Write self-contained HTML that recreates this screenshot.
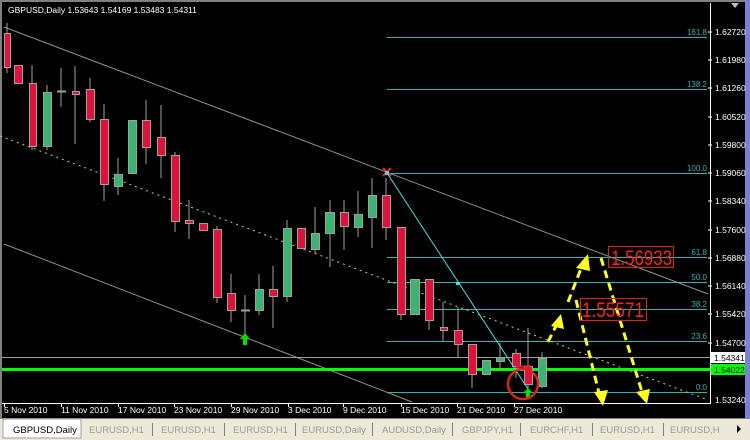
<!DOCTYPE html>
<html><head><style>
html,body{margin:0;padding:0;background:#ece9d8;width:750px;height:440px;overflow:hidden}
svg{display:block}
text{font-family:"Liberation Sans",sans-serif}
</style></head><body>
<svg width="750" height="440" xmlns="http://www.w3.org/2000/svg">
<rect x="0" y="0" width="750" height="440" fill="#ece9d8"/>
<rect x="0" y="0" width="746" height="419" fill="#808080"/>
<rect x="2" y="2" width="743" height="416" fill="#000"/>
<rect x="745" y="0" width="5" height="419" fill="#7b7fd8"/>
<polygon points="731,3 739,3 735,8" fill="#c0c0c0"/>
<g stroke="#2bb5b5" stroke-width="1">
<line x1="387" y1="37.5" x2="707" y2="37.5"/>
<line x1="387" y1="89.5" x2="707" y2="89.5"/>
<line x1="387" y1="173.5" x2="707" y2="173.5"/>
<line x1="387" y1="257.5" x2="707" y2="257.5"/>
<line x1="387" y1="282.5" x2="707" y2="282.5"/>
<line x1="387" y1="309.5" x2="707" y2="309.5"/>
<line x1="387" y1="341.5" x2="707" y2="341.5"/>
<line x1="387" y1="392.5" x2="707" y2="392.5"/>
</g>
<g fill="#2bb5b5" font-size="8" text-anchor="end">
<text x="707" y="35">161.8</text><text x="707" y="87">138.2</text><text x="707" y="171">100.0</text>
<text x="707" y="255">61.8</text><text x="707" y="280">50.0</text><text x="707" y="307">38.2</text>
<text x="707" y="339">23.6</text><text x="707" y="390">0.0</text>
</g>
<line x1="4" y1="27" x2="708" y2="294" stroke="#909090"/>
<line x1="4" y1="244" x2="412" y2="402" stroke="#909090"/>
<line x1="0" y1="136" x2="708" y2="400" stroke="#d8d820" stroke-dasharray="2,4"/>
<line x1="2" y1="357.5" x2="710" y2="357.5" stroke="#a0a0a0"/>
<rect x="2" y="368" width="708" height="3" fill="#00ff00"/>
<g stroke="#a0a0a0">
<line x1="7" y1="23" x2="7" y2="73"/><line x1="32" y1="65" x2="32" y2="150"/><line x1="47" y1="85" x2="47" y2="150"/>
<line x1="61" y1="68" x2="61" y2="107"/><line x1="75" y1="66" x2="75" y2="144"/><line x1="90" y1="78" x2="90" y2="122"/>
<line x1="104" y1="104" x2="104" y2="201"/><line x1="118" y1="158" x2="118" y2="195"/><line x1="146" y1="100" x2="146" y2="164"/>
<line x1="161" y1="105" x2="161" y2="178"/><line x1="175" y1="152" x2="175" y2="232"/><line x1="189" y1="200" x2="189" y2="239"/>
<line x1="217" y1="226" x2="217" y2="303"/><line x1="231" y1="274" x2="231" y2="322"/><line x1="245" y1="295" x2="245" y2="340"/>
<line x1="259" y1="274" x2="259" y2="315"/><line x1="273" y1="266" x2="273" y2="328"/><line x1="287" y1="220" x2="287" y2="302"/>
<line x1="315" y1="207" x2="315" y2="253"/><line x1="330" y1="200" x2="330" y2="267"/><line x1="344" y1="200" x2="344" y2="250"/>
<line x1="358" y1="191" x2="358" y2="237"/><line x1="372" y1="178" x2="372" y2="248"/><line x1="386" y1="178" x2="386" y2="240"/>
<line x1="401" y1="227" x2="401" y2="320"/><line x1="429" y1="279" x2="429" y2="330"/><line x1="443" y1="302" x2="443" y2="341"/>
<line x1="458" y1="307" x2="458" y2="357"/><line x1="472" y1="344" x2="472" y2="388"/><line x1="500" y1="343" x2="500" y2="370"/>
<line x1="516" y1="349" x2="516" y2="378"/><line x1="528" y1="328" x2="528" y2="392"/><line x1="542" y1="352" x2="542" y2="388"/>
</g>
<g stroke="#a0a0a0" stroke-width="1">
<g fill="#dc143c">
<rect x="4.5" y="33.5" width="6" height="34"/><rect x="14.5" y="65.5" width="8" height="18"/><rect x="29.5" y="83.5" width="7" height="63"/>
<rect x="72.5" y="91.5" width="7" height="3"/><rect x="86.5" y="89.5" width="8" height="30"/><rect x="100.5" y="119.5" width="8" height="65"/>
<rect x="142.5" y="120.5" width="8" height="27"/><rect x="157.5" y="137.5" width="8" height="18"/><rect x="171.5" y="155.5" width="8" height="66"/>
<rect x="185.5" y="220.5" width="8" height="3"/><rect x="199.5" y="223.5" width="8" height="7"/><rect x="213.5" y="229.5" width="8" height="68"/>
<rect x="227.5" y="293.5" width="8" height="17"/><rect x="269.5" y="289.5" width="8" height="7"/><rect x="297.5" y="228.5" width="8" height="20"/>
<rect x="340.5" y="212.5" width="8" height="14"/><rect x="382.5" y="195.5" width="8" height="32"/><rect x="397.5" y="227.5" width="8" height="87"/>
<rect x="425.5" y="279.5" width="8" height="41"/><rect x="440.5" y="327.5" width="7" height="3"/><rect x="454.5" y="330.5" width="8" height="14"/>
<rect x="468.5" y="344.5" width="8" height="30"/><rect x="512.5" y="353.5" width="8" height="13"/><rect x="524.5" y="366.5" width="8" height="18"/>
</g>
<g fill="#3cb371">
<rect x="43.5" y="92.5" width="8" height="54"/><rect x="114.5" y="174.5" width="8" height="12"/><rect x="128.5" y="120.5" width="8" height="53"/>
<rect x="255.5" y="289.5" width="8" height="21"/><rect x="283.5" y="228.5" width="8" height="68"/><rect x="311.5" y="233.5" width="8" height="16"/>
<rect x="325.5" y="212.5" width="9" height="21"/><rect x="354.5" y="214.5" width="8" height="13"/><rect x="368.5" y="195.5" width="8" height="22"/>
<rect x="410.5" y="279.5" width="9" height="35"/><rect x="482.5" y="360.5" width="8" height="14"/><rect x="496.5" y="357.5" width="8" height="4"/>
<rect x="538.5" y="358.5" width="8" height="28"/>
</g>
</g>
<line x1="57" y1="91.5" x2="66" y2="91.5" stroke="#a0a0a0" stroke-width="2"/>
<line x1="241" y1="310.5" x2="250" y2="310.5" stroke="#a0a0a0" stroke-width="2"/>
<line x1="387" y1="173" x2="530" y2="392" stroke="#40e0e0"/>
<rect x="456" y="282" width="4" height="3" fill="#40e0e0"/>
<path d="M383,168 L391,176 M391,168 L383,176" stroke="#ff2020" stroke-width="2"/>
<rect x="385" y="171" width="4" height="4" fill="#40e0e0"/>
<path d="M245,333 L240,339 L243,339 L243,345 L247,345 L247,339 L250,339 Z" fill="#00e000"/>
<path d="M528,388 L523,393 L526,393 L526,398 L530,398 L530,393 L533,393 Z" fill="#00e000"/>
<circle cx="523" cy="384" r="15" fill="none" stroke="#e02020" stroke-width="2.5"/>
<path d="M516,367 L530,366" stroke="#e02020" stroke-width="2"/>
<g stroke="#ffff20" stroke-width="3" stroke-dasharray="8,5" fill="none">
<line x1="548" y1="342" x2="557" y2="324"/>
<line x1="568" y1="302" x2="582" y2="266"/>
<line x1="576" y1="300" x2="599" y2="393"/>
<line x1="601" y1="258" x2="642" y2="392"/>
</g>
<g fill="#ffff20">
<polygon points="561,314 551,326 564,329"/>
<polygon points="588,254 576,268 590,271"/>
<polygon points="603,406 594,392 608,390"/>
<polygon points="647,404 636,392 650,389"/>
</g>
<rect x="608.5" y="246.5" width="65" height="21" fill="none" stroke="#e02020"/>
<text x="611" y="265" fill="#ff2020" font-size="21" textLength="61" lengthAdjust="spacingAndGlyphs">1.56933</text>
<rect x="580.5" y="298.5" width="66" height="22" fill="none" stroke="#e02020"/>
<text x="582" y="317" fill="#ff2020" font-size="21" textLength="62" lengthAdjust="spacingAndGlyphs">1.55571</text>
<line x1="710.5" y1="3" x2="710.5" y2="403" stroke="#fff"/>
<line x1="2" y1="403.5" x2="711" y2="403.5" stroke="#fff"/>
<g fill="#fff" font-size="8.5">
<text x="715" y="35">1.62720</text><text x="715" y="63">1.61980</text><text x="715" y="91">1.61260</text>
<text x="715" y="120">1.60520</text><text x="715" y="148">1.59800</text><text x="715" y="176">1.59060</text>
<text x="715" y="204">1.58340</text><text x="715" y="233">1.57600</text><text x="715" y="261">1.56880</text>
<text x="715" y="289">1.56140</text><text x="715" y="317">1.55420</text><text x="715" y="346">1.54700</text>
<text x="715" y="403">1.53240</text>
</g>
<g stroke="#fff"><line x1="708" y1="32" x2="712" y2="32"/><line x1="708" y1="60" x2="712" y2="60"/><line x1="708" y1="88" x2="712" y2="88"/><line x1="708" y1="117" x2="712" y2="117"/><line x1="708" y1="145" x2="712" y2="145"/><line x1="708" y1="173" x2="712" y2="173"/><line x1="708" y1="201" x2="712" y2="201"/><line x1="708" y1="230" x2="712" y2="230"/><line x1="708" y1="258" x2="712" y2="258"/><line x1="708" y1="286" x2="712" y2="286"/><line x1="708" y1="314" x2="712" y2="314"/><line x1="708" y1="343" x2="712" y2="343"/></g>
<rect x="711" y="352" width="34" height="11" fill="#fff"/>
<text x="714" y="361" fill="#000" font-size="8.5">1.54341</text>
<rect x="711" y="364" width="34" height="11" fill="#00ff00"/>
<text x="714" y="373" fill="#000" font-size="8.5">1.54022</text>
<g fill="#fff" font-size="8.5">
<text x="4" y="413">5 Nov 2010</text><text x="61" y="413">11 Nov 2010</text><text x="118" y="413">17 Nov 2010</text>
<text x="174" y="413">23 Nov 2010</text><text x="231" y="413">29 Nov 2010</text><text x="288" y="413">3 Dec 2010</text>
<text x="343" y="413">9 Dec 2010</text><text x="401" y="413">15 Dec 2010</text><text x="457" y="413">21 Dec 2010</text>
<text x="514" y="413">27 Dec 2010</text>
</g>
<g stroke="#fff"><line x1="4.5" y1="403" x2="4.5" y2="407"/><line x1="61.5" y1="403" x2="61.5" y2="407"/><line x1="118.5" y1="403" x2="118.5" y2="407"/><line x1="174.5" y1="403" x2="174.5" y2="407"/><line x1="231.5" y1="403" x2="231.5" y2="407"/><line x1="288.5" y1="403" x2="288.5" y2="407"/><line x1="343.5" y1="403" x2="343.5" y2="407"/><line x1="401.5" y1="403" x2="401.5" y2="407"/><line x1="457.5" y1="403" x2="457.5" y2="407"/><line x1="514.5" y1="403" x2="514.5" y2="407"/></g>
<text x="8" y="13" fill="#fff" font-size="8.5">GBPUSD,Daily  1.53643 1.54169 1.53483 1.54311</text>
<rect x="3" y="419" width="78" height="19" fill="#fff" stroke="#a0a0a0"/>
<text x="13" y="433" fill="#000" font-size="9.5">GBPUSD,Daily</text>
<g fill="#9a9a9a" font-size="9.5">
<text x="89" y="433">EURUSD,H1</text><text x="161" y="433">EURUSD,H1</text><text x="233" y="433">EURUSD,H1</text>
<text x="302" y="433">EURUSD,Daily</text><text x="382" y="433">AUDUSD,Daily</text><text x="462" y="433">GBPJPY,H1</text>
<text x="530" y="433">EURCHF,H1</text><text x="600" y="433">EURUSD,H1</text><text x="670" y="433">EURUSD,H</text>
</g>
<g stroke="#808080"><line x1="152.5" y1="423" x2="152.5" y2="436"/><line x1="224.5" y1="423" x2="224.5" y2="436"/><line x1="295.5" y1="423" x2="295.5" y2="436"/><line x1="372.5" y1="423" x2="372.5" y2="436"/><line x1="452.5" y1="423" x2="452.5" y2="436"/><line x1="520.5" y1="423" x2="520.5" y2="436"/><line x1="592.5" y1="423" x2="592.5" y2="436"/><line x1="663.5" y1="423" x2="663.5" y2="436"/></g>
<polygon points="737,425 741,429 737,433" fill="#000"/>
</svg>
</body></html>
